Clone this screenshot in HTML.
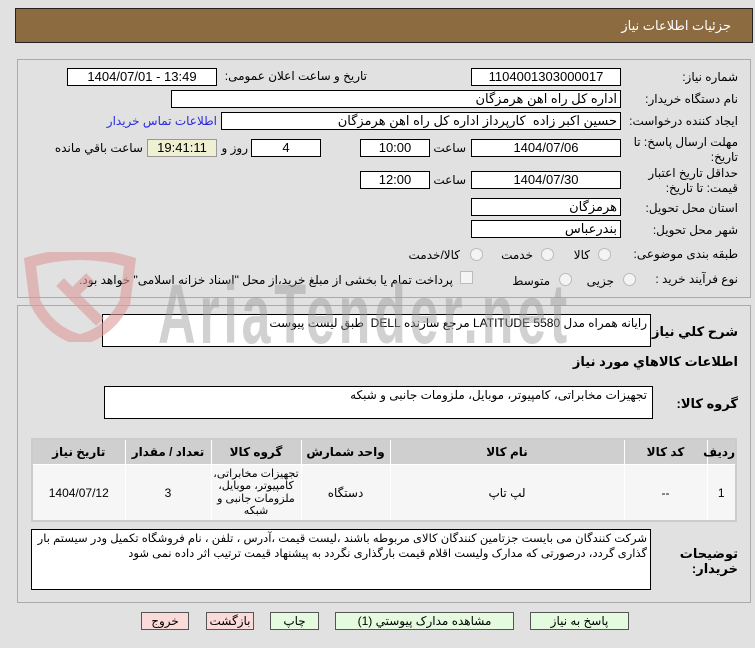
<!DOCTYPE html>
<html><head><meta charset="utf-8"><style>
body{margin:0;width:755px;height:648px;background:#e1e1e1;font-family:"Liberation Sans","DejaVu Sans",sans-serif;font-size:12px;color:#000;position:relative;overflow:hidden}
.a{position:absolute}
.box{position:absolute;background:#fff;border:1px solid #000;box-sizing:border-box;text-align:center;line-height:16px;font-size:13px}
.lbl{position:absolute;direction:rtl;white-space:nowrap}
.r{position:absolute;width:11px;height:11px;border-radius:50%;border:1px solid #bbb;background:#f4f4f4}
.btn{position:absolute;border:1px solid #555;box-sizing:border-box;text-align:center;line-height:16px;font-size:12px;background:#e4fbdf}
.pk{background:#fbdada}
td{border:1px solid #fff;text-align:center;direction:rtl;padding:0}
</style></head><body>
<div class="a" style="left:15px;top:8px;width:738px;height:35px;background:#8c6b40;border:1px solid #222;box-sizing:border-box"></div>
<div class="lbl" style="right:24px;top:18px;color:#fff;font-size:13px">جزئیات اطلاعات نیاز</div>

<div class="a" style="left:17px;top:59px;width:734px;height:239px;border:1px solid #aaa;box-sizing:border-box"></div>
<div class="a" style="left:17px;top:305px;width:734px;height:298px;border:1px solid #aaa;box-sizing:border-box"></div>

<div class="lbl" style="right:17px;top:70px">شماره نیاز:</div>
<div class="box" style="left:471px;top:68px;width:150px;height:18px">1104001303000017</div>
<div class="lbl" style="right:388px;top:69px">تاریخ و ساعت اعلان عمومی:</div>
<div class="box" style="left:67px;top:68px;width:150px;height:18px">1404/07/01 - 13:49</div>

<div class="lbl" style="right:17px;top:92px">نام دستگاه خریدار:</div>
<div class="box" style="left:171px;top:90px;width:450px;height:18px;text-align:right;padding-right:3px;direction:rtl">اداره کل راه اهن هرمزگان</div>

<div class="lbl" style="right:17px;top:114px">ایجاد کننده درخواست:</div>
<div class="box" style="left:221px;top:112px;width:400px;height:18px;text-align:right;padding-right:3px;direction:rtl">حسین اکبر زاده&nbsp; کارپرداز اداره کل راه اهن هرمزگان</div>
<div class="lbl" style="right:538px;top:114px;color:#2a2ae0">اطلاعات تماس خریدار</div>

<div class="lbl" style="right:17px;top:135px;line-height:15px;text-align:right">مهلت ارسال پاسخ: تا<br>تاریخ:</div>
<div class="box" style="left:471px;top:139px;width:150px;height:18px">1404/07/06</div>
<div class="lbl" style="right:289px;top:141px">ساعت</div>
<div class="box" style="left:360px;top:139px;width:70px;height:18px">10:00</div>
<div class="box" style="left:251px;top:139px;width:70px;height:18px">4</div>
<div class="lbl" style="right:507px;top:141px">روز و</div>
<div class="box" style="left:147px;top:139px;width:70px;height:18px;background:#efefd2;border-color:#999">19:41:11</div>
<div class="lbl" style="right:612px;top:141px">ساعت باقي مانده</div>

<div class="lbl" style="right:17px;top:166px;line-height:15px;text-align:right">حداقل تاریخ اعتبار<br>قیمت: تا تاریخ:</div>
<div class="box" style="left:471px;top:171px;width:150px;height:18px">1404/07/30</div>
<div class="lbl" style="right:289px;top:173px">ساعت</div>
<div class="box" style="left:360px;top:171px;width:70px;height:18px">12:00</div>

<div class="lbl" style="right:17px;top:201px">استان محل تحویل:</div>
<div class="box" style="left:471px;top:198px;width:150px;height:18px;text-align:right;padding-right:3px">هرمزگان</div>
<div class="lbl" style="right:17px;top:223px">شهر محل تحویل:</div>
<div class="box" style="left:471px;top:220px;width:150px;height:18px;text-align:right;padding-right:3px">بندرعباس</div>

<div class="lbl" style="right:17px;top:247px">طبقه بندی موضوعی:</div>
<div class="r" style="left:598px;top:248px"></div><div class="lbl" style="right:165px;top:248px">کالا</div>
<div class="r" style="left:541px;top:248px"></div><div class="lbl" style="right:222px;top:248px">خدمت</div>
<div class="r" style="left:470px;top:248px"></div><div class="lbl" style="right:295px;top:248px">کالا/خدمت</div>

<div class="lbl" style="right:17px;top:272px">نوع فرآیند خرید :</div>
<div class="r" style="left:623px;top:273px"></div><div class="lbl" style="right:141px;top:274px">جزیی</div>
<div class="r" style="left:559px;top:273px"></div><div class="lbl" style="right:205px;top:274px">متوسط</div>
<div class="a" style="left:460px;top:271px;width:11px;height:11px;border:1px solid #bbb;background:#f4f4f4"></div>
<div class="lbl" style="right:302px;top:273px">پرداخت تمام یا بخشی از مبلغ خرید،از محل "اسناد خزانه اسلامی" خواهد بود.</div>

<div class="lbl" style="right:17px;top:324px;font-weight:bold;font-size:13px">شرح کلي نياز:</div>
<div class="box" style="left:102px;top:314px;width:549px;height:33px;text-align:right;padding-right:3px;direction:rtl;background:#fff;font-size:12px">رایانه همراه مدل LATITUDE 5580 مرجع سازنده DELL&nbsp; طبق لیست پیوست</div>
<div class="lbl" style="right:17px;top:354px;font-weight:bold;font-size:13px">اطلاعات کالاهاي مورد نياز</div>
<div class="lbl" style="right:17px;top:396px;font-weight:bold;font-size:13px">گروه کالا:</div>
<div class="box" style="left:104px;top:386px;width:549px;height:33px;text-align:right;padding-right:5px;direction:rtl;font-size:12px">تجهیزات مخابراتی، کامپیوتر، موبایل، ملزومات جانبی و شبکه</div>

<!-- watermark overlay -->
<svg class="a" style="left:20px;top:252px;opacity:.6" width="130" height="90"><path d="M10 10 Q60 -5 110 10 L105 50 Q90 80 60 88 Q30 80 15 50 Z" fill="none" stroke="#dd9a9a" stroke-width="11"/><path d="M40 30 L80 70 M70 25 L55 40" stroke="#dd9a9a" stroke-width="11"/></svg>
<div class="a" style="left:158px;top:272px;font-size:84px;line-height:84px;font-weight:bold;color:#9a9a9a;opacity:.45;transform:scaleX(0.62);transform-origin:left top;letter-spacing:6px;white-space:nowrap">AriaTender.net</div>

<table class="a" style="left:31px;top:438px;width:706px;height:84px;border-collapse:collapse;border:2px solid #ccc;font-size:12px;direction:rtl;table-layout:fixed">
<colgroup><col style="width:29px"><col style="width:83px"><col style="width:234px"><col style="width:89px"><col style="width:90px"><col style="width:86px"><col></colgroup>
<tr style="height:25px;background:#cfcfcf;font-weight:bold"><td>ردیف</td><td>کد کالا</td><td>نام کالا</td><td>واحد شمارش</td><td>گروه کالا</td><td>تعداد / مقدار</td><td>تاریخ نیاز</td></tr>
<tr style="background:#f6f6f6;font-size:12px;height:55px"><td>1</td><td>--</td><td>لپ تاپ</td><td>دستگاه</td><td style="font-size:11px;line-height:12.5px">تجهیزات مخابراتی، کامپیوتر، موبایل، ملزومات جانبی و شبکه</td><td>3</td><td>1404/07/12</td></tr>
</table>

<div class="lbl" style="right:17px;top:546px;font-weight:bold;line-height:15px;text-align:right;font-size:13px">توضیحات<br>خریدار:</div>
<div class="box" style="left:31px;top:529px;width:620px;height:61px;text-align:right;padding:2px 3px;direction:rtl;font-size:11.5px;line-height:15px">شرکت کنندگان می بایست جزتامین کنندگان کالای مربوطه باشند ،لیست قیمت ،آدرس ، تلفن ، نام فروشگاه تکمیل ودر سیستم بار گذاری گردد، درصورتی که مدارک ولیست اقلام قیمت بارگذاری نگردد به پیشنهاد قیمت ترتیب اثر داده نمی شود</div>

<div class="btn" style="left:530px;top:612px;width:99px;height:18px">پاسخ به نیاز</div>
<div class="btn" style="left:335px;top:612px;width:179px;height:18px">مشاهده مدارک پیوستي (1)</div>
<div class="btn" style="left:270px;top:612px;width:49px;height:18px">چاپ</div>
<div class="btn pk" style="left:206px;top:612px;width:48px;height:18px">بازگشت</div>
<div class="btn pk" style="left:141px;top:612px;width:48px;height:18px">خروج</div>
</body></html>
